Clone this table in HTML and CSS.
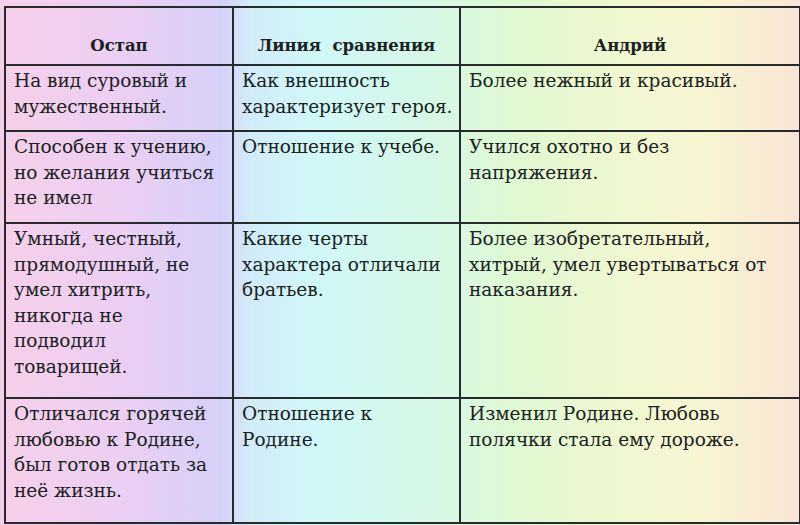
FILE: index.html
```html
<!DOCTYPE html>
<html lang="ru">
<head>
<meta charset="utf-8">
<title>Остап и Андрий</title>
<link rel="stylesheet" href="styles.css">
</head>
<body>
<table class="cmp">
  <colgroup>
    <col class="c1">
    <col class="c2">
    <col class="c3">
  </colgroup>
  <thead>
    <tr class="head">
      <th>Остап</th>
      <th>Линия&nbsp; сравнения</th>
      <th>Андрий</th>
    </tr>
  </thead>
  <tbody>
    <tr class="r1">
      <td>На вид суровый и мужественный.</td>
      <td>Как внешность характеризует героя.</td>
      <td>Более нежный и красивый.</td>
    </tr>
    <tr class="r2">
      <td>Способен к учению, но желания учиться не имел</td>
      <td>Отношение к учебе.</td>
      <td>Учился охотно и без<br>напряжения.</td>
    </tr>
    <tr class="r3">
      <td>Умный, честный, прямодушный, не умел хитрить, никогда не подводил товарищей.</td>
      <td>Какие черты характера отличали братьев.</td>
      <td>Более изобретательный, хитрый, умел увертываться от наказания.</td>
    </tr>
    <tr class="r4">
      <td>Отличался горячей любовью к Родине, был готов отдать за неё жизнь.</td>
      <td>Отношение к<br>Родине.</td>
      <td>Изменил Родине. Любовь полячки стала ему дороже.</td>
    </tr>
  </tbody>
</table>
</body>
</html>
```

FILE: styles.css
```css
html, body {
  margin: 0;
  padding: 0;
}
body {
  width: 800px;
  height: 525px;
  overflow: hidden;
  padding-top: 6px;
  padding-left: 4px;
  box-sizing: border-box;
  background: linear-gradient(90deg,
    #f6d0ea 0px,
    #eccff2 120px,
    #d6d0f8 220px,
    #d2ecf8 250px,
    #d0f8f8 320px,
    #d6f8e6 430px,
    #e0f8d2 520px,
    #eef8d0 610px,
    #f8f6d2 700px,
    #f8e4d4 800px);
  color: #1a2222;
  font-family: "DejaVu Serif", "Liberation Serif", serif;
}
.cmp {
  border-collapse: collapse;
  table-layout: fixed;
  width: 795px;
}
.c1 { width: 228px; }
.c2 { width: 227px; }
.c3 { width: 340px; }
.cmp th,
.cmp td {
  border: 2px solid #262c2c;
  vertical-align: top;
  text-align: left;
}
.cmp th {
  vertical-align: bottom;
  text-align: center;
  font-size: 16.5px;
  font-weight: bold;
  padding: 0 6px 9px;
}
.cmp td {
  font-size: 18.5px;
  line-height: 25.5px;
  padding: 2px 3px 0 8px;
}
.cmp td:first-child { padding-right: 12px; }
.cmp td:last-child { padding-right: 8px; }
.head { height: 58px; }
.r1 { height: 66px; }
.r2 { height: 92px; }
.r3 { height: 175px; }
.r4 { height: 125px; }
```
